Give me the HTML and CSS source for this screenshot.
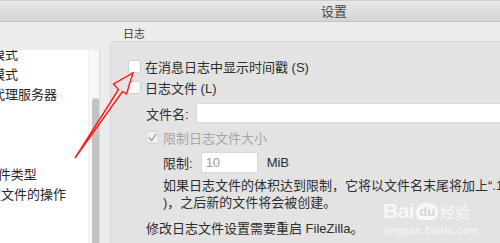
FILE: index.html
```html
<!DOCTYPE html>
<html lang="zh-CN">
<head>
<meta charset="utf-8">
<title>设置</title>
<link rel="stylesheet" href="styles.css">
</head>
<body>
<div class="window">
  <div class="titlebar"><span class="title">设置</span></div>
  <div class="body">
    <div class="sidebar">
      <ul class="tree">
        <li class="item first l2">主动模式</li>
        <li class="item l2">被动模式</li>
        <li class="item l2b">FTP 代理服务器</li>
        <li class="item l1">SFTP</li>
        <li class="item l1">通用代理</li>
        <li class="item l0">传输</li>
        <li class="item l1b">FTP: 文件类型</li>
        <li class="item l2c">已存在文件的操作</li>
        <li class="item l0">界面</li>
      </ul>
      <div class="scrollbar"><div class="thumb"></div></div>
    </div>
    <div class="content">
      <div class="section-label">日志</div>
      <div class="group">
        <div class="row"><span class="cb"></span><span>在消息日志中显示时间戳 (S)</span></div>
        <div class="row"><span class="cb"></span><span>日志文件 (L)</span></div>
        <div class="row field-row sub"><span class="field-label">文件名:</span><span class="input input-wide"></span></div>
        <div class="row sub cb-row-gap disabled"><span class="cb cb-checked"><svg viewBox="0 0 13 13" width="13" height="13"><polyline points="3,6.8 5.5,9.6 10,3.2" fill="none" stroke="#a9a9a9" stroke-width="1.5" stroke-linecap="round" stroke-linejoin="round"/></svg></span><span>限制日志文件大小</span></div>
        <div class="row field-row sub2 limit-row"><span class="field-label limit-label">限制:</span><span class="input input-small">10</span><span class="unit">MiB</span></div>
        <div class="para sub2">
          <span class="line">如果日志文件的体积达到限制，它将以文件名末尾将加上“.1”</span>
          <span class="line">)，之后新的文件将会被创建。</span>
        </div>
        <div class="row sub note">修改日志文件设置需要重启 FileZilla。</div>
      </div>
    </div>
  </div>
  <svg class="arrow" viewBox="0 0 500 243" width="500" height="243">
    <polygon points="75,158 118.5,89.5 113.5,84 133,73 126.5,94 122.5,91.5" fill="none" stroke="#ff1a1a" stroke-width="1.4" stroke-linejoin="miter"/>
  </svg>
  <div class="watermark">
    <div class="wm-logo"><span class="wm-bai">Bai</span><span class="wm-du">du</span><span class="wm-jy">经验</span></div>
    <div class="wm-url">jingyan.baidu.com</div>
  </div>
</div>
</body>
</html>
```
FILE: styles.css
```css
* { box-sizing: border-box; }
html, body { margin: 0; padding: 0; }
body {
  width: 500px;
  height: 243px;
  overflow: hidden;
  background: #ececec;
  font-family: "Liberation Sans", "Noto Sans CJK SC", sans-serif;
  font-size: 13px;
  color: #2e2e2e;
}
.window {
  position: relative;
  width: 500px;
  height: 243px;
  overflow: hidden;
  display: flex;
  flex-direction: column;
}
.titlebar {
  height: 22px;
  flex: none;
  background: linear-gradient(#e8e8e8, #d4d4d4);
  border-top: 1px solid #cdcdcd;
  border-bottom: 1px solid #c3c3c3;
  display: flex;
  align-items: center;
  padding-left: 321px;
}
.title {
  font-family: "Noto Sans CJK SC", sans-serif;
  font-size: 13px;
  line-height: 20px;
  color: #4a4a4a;
}
.body {
  flex: 1;
  display: flex;
  min-height: 0;
}
.sidebar {
  width: 100px;
  flex: none;
  margin-top: 28px;
  display: flex;
}
.tree {
  list-style: none;
  margin: 0;
  padding: 0;
  width: 88px;
  background: #ffffff;
  overflow: hidden;
}
.item {
  height: 20px;
  line-height: 20px;
  white-space: nowrap;
  color: #262626;
}
.item.first { margin-top: -5px; }
.l2 { margin-left: -34px; }
.l2b { margin-left: -36px; }
.l2c { margin-left: -38px; }
.l1 { margin-left: -53px; }
.l1b { margin-left: -47px; }
.l0 { margin-left: -70px; }
.scrollbar {
  width: 12px;
  background: #f7f7f7;
  border-left: 1px solid #efefef;
  border-right: 1px solid #dadada;
  padding-left: 3px;
}
.thumb {
  width: 7px;
  height: 200px;
  margin-top: 48px;
  background: #c3c3c3;
  border-radius: 4px;
}
.content {
  flex: 1;
  margin-left: 10px;
  display: flex;
  flex-direction: column;
  min-width: 0;
}
.section-label {
  margin-top: 6px;
  padding-left: 13px;
  font-size: 11px;
  line-height: 13px;
  color: #3a3a3a;
}
.group {
  width: 420px;
  height: 240px;
  flex: none;
  background: #e3e3e3;
  border: 1px solid #d6d6d6;
  border-radius: 5px;
  padding: 14px 0 0 17px;
  display: flex;
  flex-direction: column;
}
.row {
  height: 21px;
  display: flex;
  align-items: center;
  white-space: nowrap;
}
.cb {
  width: 13px;
  height: 13px;
  flex: none;
  background: #ffffff;
  border: 1px solid #cfcfcf;
  border-radius: 3px;
  margin-right: 4px;
  display: flex;
}
.cb svg { margin: -1px; }
.cb-checked {
  background: #f1f1f1;
  border-color: #d5d5d5;
}
.sub { padding-left: 18px; }
.sub2 { padding-left: 35px; }
.field-row {
  height: 20px;
  margin-top: 5px;
}
.field-label { margin-right: 7px; }
.input {
  background: #ffffff;
  border: 1px solid #d9d9d9;
  height: 20px;
  display: flex;
  align-items: center;
}
.input-wide { width: 320px; }
.cb-row-gap { margin-top: 4px; }
.disabled { color: #a6a6a6; }
.limit-row {
  height: 21px;
  margin-top: 4px;
}
.limit-label { margin-right: 8px; }
.input-small {
  width: 57px;
  height: 21px;
  padding-left: 4px;
  color: #9c9c9c;
}
.unit { margin-left: 9px; }
.para {
  margin-top: 4px;
  display: flex;
  flex-direction: column;
}
.line {
  display: block;
  line-height: 17px;
  white-space: nowrap;
}
.note {
  margin-top: 8px;
  height: 17px;
}
.arrow {
  position: absolute;
  left: 0;
  top: 0;
  pointer-events: none;
}
.watermark {
  position: absolute;
  left: 383px;
  top: 199px;
  color: rgba(255, 255, 255, 0.75);
  pointer-events: none;
}
.wm-logo {
  display: flex;
  align-items: center;
  height: 24px;
}
.wm-bai {
  font-family: "Liberation Sans", sans-serif;
  font-weight: bold;
  font-size: 21px;
  letter-spacing: -0.5px;
}
.wm-du {
  font-family: "Liberation Sans", sans-serif;
  font-weight: bold;
  font-size: 13px;
  color: rgba(210, 210, 210, 0.9);
  background: rgba(255, 255, 255, 0.7);
  border-radius: 9px 9px 6px 6px;
  padding: 1px 3px 0;
  margin: 0 2px;
  line-height: 16px;
}
.wm-jy {
  font-family: "Noto Sans CJK SC", sans-serif;
  font-size: 15px;
}
.wm-url {
  font-family: "Liberation Sans", sans-serif;
  font-size: 11px;
  line-height: 13px;
  margin-top: 1px;
  margin-left: 2px;
  letter-spacing: 0.3px;
}
```
